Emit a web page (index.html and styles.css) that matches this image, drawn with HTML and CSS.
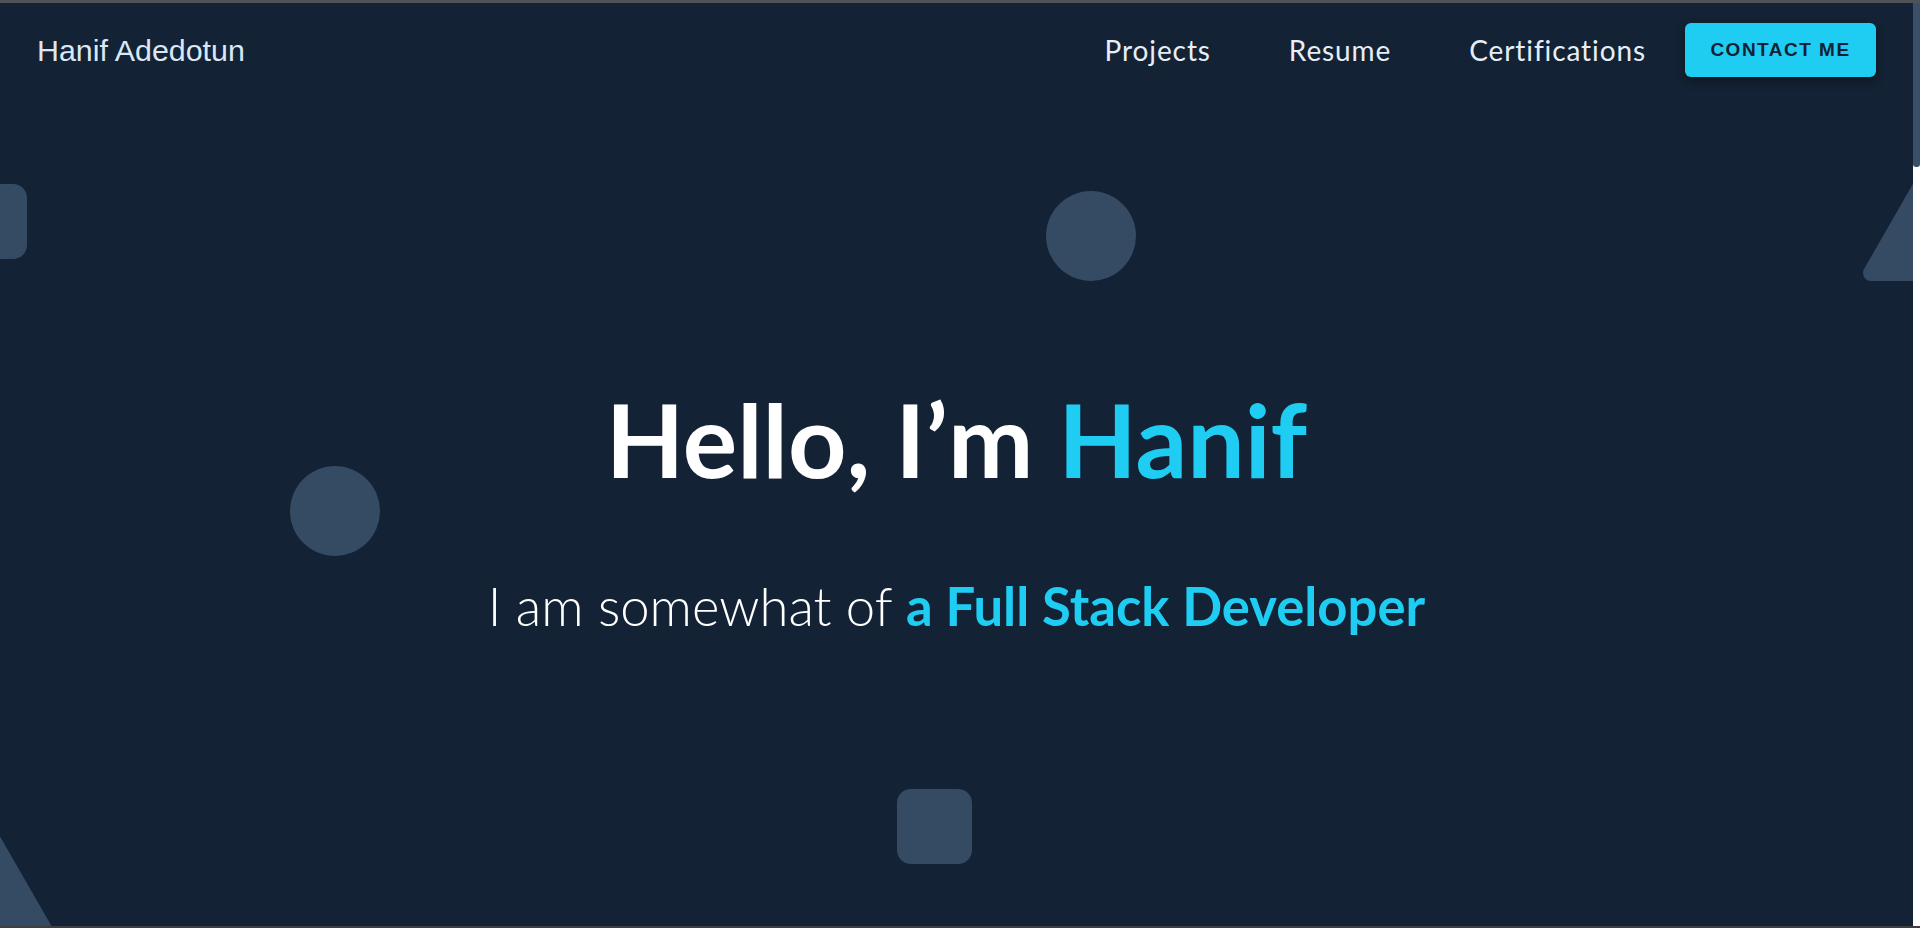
FILE: index.html
```html
<!DOCTYPE html>
<html lang="en">
<head>
<meta charset="utf-8">
<title>Hanif Adedotun</title>
<link rel="stylesheet" href="styles.css">
</head>
<body>
<div class="frame">
  <div class="page">
    <div class="shapes" aria-hidden="true">
      <span class="shape square square-left"></span>
      <span class="shape circle circle-top"></span>
      <span class="shape circle circle-left"></span>
      <span class="shape square square-bottom"></span>
      <svg class="tri tri-right" viewBox="0 0 120 110"><polygon points="60,10 110,97 10,97"/></svg>
      <svg class="tri tri-left" viewBox="0 0 120 110"><polygon points="60,10 110,97 10,97"/></svg>
    </div>
    <header class="header">
      <a class="brand" href="#">Hanif Adedotun</a>
      <nav class="nav">
        <ul class="nav-links">
          <li><a href="#">Projects</a></li>
          <li><a href="#">Resume</a></li>
          <li><a href="#">Certifications</a></li>
        </ul>
        <a class="contact-btn" href="#">CONTACT ME</a>
      </nav>
    </header>
    <main class="hero">
      <h1 class="hero-title">Hello, I’m <span class="accent">Hanif</span></h1>
      <p class="hero-sub">I am somewhat of <strong class="accent">a Full Stack Developer</strong></p>
    </main>
  </div>
  <div class="scrollbar"><div class="thumb"></div></div>
</div>
</body>
</html>
```
FILE: styles.css
```css
html, body {
  margin: 0;
  padding: 0;
  height: 100%;
}
body {
  background: #132234;
  font-family: Lato, "Noto Sans", sans-serif;
  color: #ffffff;
}
.frame {
  height: 100vh;
  box-sizing: border-box;
  border-top: 3px solid #4f5256;
  border-bottom: 2px solid #3d3f42;
  display: flex;
}
.page {
  flex: 1;
  position: relative;
  overflow: hidden;
  display: flex;
  flex-direction: column;
}
.scrollbar {
  width: 7px;
  background: #ffffff;
}
.thumb {
  height: 164px;
  background: #3a5068;
  border-radius: 0 0 3px 3px;
}
.shapes {
  position: absolute;
  inset: 0;
  pointer-events: none;
}
.shape {
  position: absolute;
  background: #344b63;
}
.square {
  width: 75px;
  height: 75px;
  border-radius: 14px;
}
.square-left { left: -48px; top: 181px; }
.square-bottom { left: 897px; top: 786px; }
.circle {
  width: 90px;
  height: 90px;
  border-radius: 50%;
}
.circle-top { left: 1046px; top: 188px; }
.circle-left { left: 290px; top: 463px; }
.tri {
  position: absolute;
  width: 120px;
  height: 110px;
}
.tri polygon {
  fill: #344b63;
  stroke: #344b63;
  stroke-width: 16;
  stroke-linejoin: round;
}
.tri-right { left: 1861px; top: 173px; }
.tri-left { left: -66px; top: 829px; }

.header {
  position: relative;
  height: 94px;
  padding: 0 37px;
  display: flex;
  align-items: center;
  justify-content: space-between;
}
.brand {
  font-family: "Liberation Sans", Arial, sans-serif;
  font-size: 30.4px;
  color: #dbe7f4;
  text-decoration: none;
}
.nav {
  display: flex;
  align-items: center;
}
.nav-links {
  list-style: none;
  margin: 0;
  padding: 0;
  display: flex;
  gap: 78px;
}
.nav-links a {
  font-size: 28px;
  font-weight: 400;
  letter-spacing: 0.9px;
  color: #e6eef7;
  text-decoration: none;
}
.contact-btn {
  margin-left: 39px;
  width: 191px;
  height: 54px;
  box-sizing: border-box;
  display: flex;
  align-items: center;
  justify-content: center;
  background: #1fcdf2;
  color: #132234;
  border-radius: 6px;
  font-family: "Liberation Sans", Arial, sans-serif;
  font-weight: 700;
  font-size: 19px;
  letter-spacing: 1.5px;
  text-decoration: none;
  box-shadow: 0 4px 10px rgba(0, 0, 0, 0.35);
}
.hero {
  position: relative;
  flex: 1;
  display: flex;
  flex-direction: column;
  align-items: center;
  justify-content: center;
  padding-bottom: 8px;
}
.hero-title {
  margin: 0;
  font-size: 102px;
  font-weight: 700;
  line-height: 1.2;
  color: #ffffff;
}
.hero-sub {
  margin: 74px 0 0;
  font-size: 52.6px;
  font-weight: 300;
  color: #ffffff;
}
.hero-sub strong {
  font-weight: 700;
}
.accent {
  color: #1fcdf2;
}
```
